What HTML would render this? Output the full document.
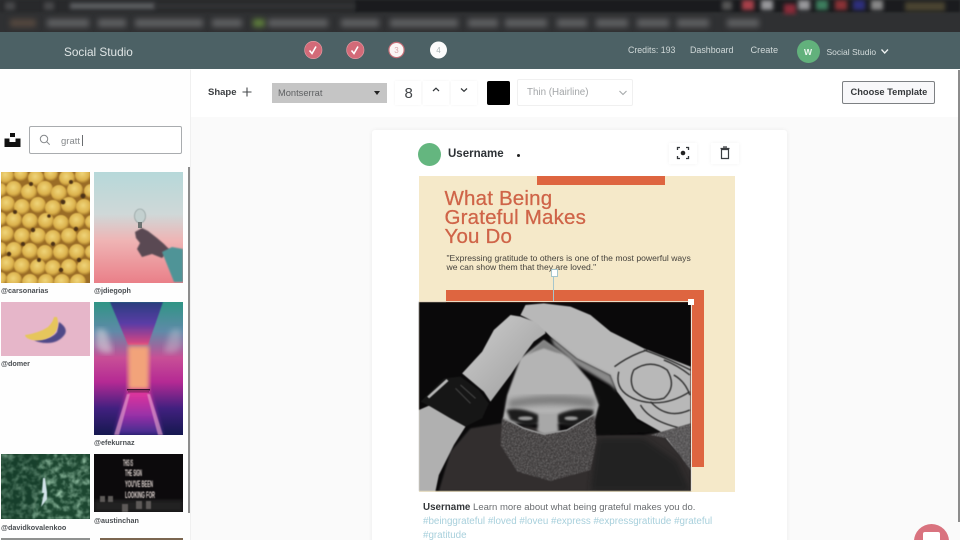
<!DOCTYPE html>
<html><head><meta charset="utf-8">
<style>
html,body{margin:0;padding:0;width:960px;height:540px;overflow:hidden;background:#fafafa;font-family:"Liberation Sans",sans-serif}
#w{position:relative;width:960px;height:540px;overflow:hidden;background:#fafafa}
.a{position:absolute}
.t{position:absolute;white-space:nowrap;filter:blur(.3px)}
.b{background:#5f6062;position:absolute;filter:blur(3px);height:8px;top:19px}
.cap{position:absolute;font-size:7.2px;font-weight:bold;color:#4a4e52;white-space:nowrap;filter:blur(.25px)}
</style></head><body><div id="w">
<!-- browser chrome -->
<div class="a" style="left:0;top:0;width:960px;height:32px;background:#2f3032;overflow:hidden">
<div class="a" style="left:0;top:0;width:355px;height:12px;background:#28292b;filter:blur(1px)"></div>
<div class="a" style="left:355px;top:0;width:605px;height:12px;background:#1a1b1e;filter:blur(1px)"></div>
<div class="a" style="left:70px;top:3px;width:85px;height:6px;background:#5d5f62;filter:blur(2px)"></div>
<div class="a" style="left:155px;top:4px;width:200px;height:4px;background:#343537;filter:blur(2px)"></div>
<div class="a" style="left:5px;top:2px;width:10px;height:8px;background:#47484a;filter:blur(2px)"></div>
<div class="a" style="left:44px;top:2px;width:10px;height:8px;background:#47484a;filter:blur(2px)"></div>
<div class="b" style="left:10px;width:26px;background:#55483f"></div><div class="b" style="left:47px;width:42px"></div>
<div class="b" style="left:98px;width:28px"></div><div class="b" style="left:135px;width:68px"></div>
<div class="b" style="left:212px;width:30px"></div><div class="b" style="left:253px;width:12px;background:#5f7f3c"></div>
<div class="b" style="left:268px;width:60px"></div><div class="b" style="left:341px;width:38px"></div>
<div class="b" style="left:390px;width:68px"></div><div class="b" style="left:468px;width:30px"></div>
<div class="b" style="left:505px;width:42px"></div><div class="b" style="left:557px;width:30px"></div>
<div class="b" style="left:596px;width:32px"></div><div class="b" style="left:637px;width:32px"></div>
<div class="b" style="left:677px;width:32px"></div><div class="b" style="left:727px;width:32px"></div>
<div class="a" style="left:722px;top:1px;width:10px;height:9px;background:#555;filter:blur(2px)"></div>
<div class="a" style="left:742px;top:0;width:12px;height:10px;background:#a8404a;filter:blur(2px)"></div>
<div class="a" style="left:761px;top:0;width:12px;height:10px;background:#98989b;filter:blur(2px)"></div>
<div class="a" style="left:784px;top:4px;width:12px;height:10px;background:#8a2c3a;filter:blur(2px)"></div>
<div class="a" style="left:798px;top:0;width:12px;height:10px;background:#98989b;filter:blur(2px)"></div>
<div class="a" style="left:816px;top:0;width:12px;height:10px;background:#3d7d5e;filter:blur(2px)"></div>
<div class="a" style="left:835px;top:0;width:12px;height:10px;background:#8a3236;filter:blur(2px)"></div>
<div class="a" style="left:853px;top:0;width:12px;height:10px;background:#2e2f7c;filter:blur(2px)"></div>
<div class="a" style="left:871px;top:0;width:12px;height:10px;background:#888;filter:blur(2px)"></div>
<div class="a" style="left:905px;top:2px;width:40px;height:9px;background:#4a4431;filter:blur(2px)"></div>
</div>
<!-- nav -->
<div class="a" style="left:0;top:32px;width:960px;height:37px;background:#4c6165"></div>
<div class="t" style="left:64px;top:44.5px;font-size:11.8px;color:#dfe5e5">Social Studio</div>
<svg class="a" style="left:300px;top:38px;filter:blur(.35px)" width="160" height="24">
<circle cx="13.3" cy="12" r="8.7" fill="#d36a78" stroke="#e9a0a8" stroke-width=".6"/><path d="M9.5 12.5l2.5 3 4-7" fill="none" stroke="#fff" stroke-width="1.6"/>
<circle cx="55.3" cy="12" r="8.7" fill="#d36a78" stroke="#e9a0a8" stroke-width=".6"/><path d="M51.5 12.5l2.5 3 4-7" fill="none" stroke="#fff" stroke-width="1.6"/>
<circle cx="96.5" cy="12" r="7.6" fill="#fbf6f5" stroke="#c66f78" stroke-width="1.2"/><text x="96.5" y="15" font-size="8" text-anchor="middle" fill="#d8a8ac" font-family="Liberation Sans">3</text>
<circle cx="138.5" cy="12" r="8.5" fill="#fbfbfb"/><text x="138.5" y="15" font-size="8" text-anchor="middle" fill="#a9b3b5" font-family="Liberation Sans">4</text>
</svg>
<div class="t" style="left:628px;top:44.5px;font-size:8.8px;color:#d0d8d8">Credits: 193</div>
<div class="t" style="left:690px;top:44.5px;font-size:8.9px;color:#d0d8d8">Dashboard</div>
<div class="t" style="left:750.5px;top:44.5px;font-size:9.2px;color:#d0d8d8">Create</div>
<div class="a" style="left:797px;top:40px;width:23px;height:23px;border-radius:50%;background:#62b17c"></div>
<div class="t" style="left:804px;top:46.5px;font-size:8.5px;font-weight:bold;color:#eef7f1">W</div>
<div class="t" style="left:826.5px;top:46.5px;font-size:8.5px;color:#d4dcdc">Social Studio</div>
<svg class="a" style="left:880px;top:47px" width="10" height="9"><path d="M1.5 2.5L4.7 6 8 2.5" fill="none" stroke="#eef2f2" stroke-width="1.3"/></svg>
<!-- left panel -->
<div class="a" style="left:0;top:69px;width:190px;height:471px;background:#fefefe"></div>
<!-- toolbar -->
<div class="a" style="left:191px;top:69px;width:769px;height:48px;background:#fff"></div>
<div class="a" style="left:190px;top:70px;width:1px;height:470px;background:#f0f0f0"></div>
<div class="t" style="left:208px;top:87px;font-size:9.5px;font-weight:bold;color:#3c3f42">Shape</div>
<svg class="a" style="left:241px;top:86px" width="12" height="12"><path d="M6 1.5v9M1.5 6h9" stroke="#45484b" stroke-width="1.1"/></svg>
<div class="a" style="left:272px;top:83px;width:115px;height:20px;background:#c5c5c5"></div>
<div class="t" style="left:278px;top:87.5px;font-size:9.3px;color:#5f6163">Montserrat</div>
<svg class="a" style="left:373px;top:90px" width="8" height="6"><path d="M1 1h6L4 5z" fill="#222"/></svg>
<div class="a" style="left:423px;top:81px;width:26px;height:24px;box-shadow:0 0 3px #f3f3f3"></div>
<div class="a" style="left:451px;top:81px;width:26px;height:24px;box-shadow:0 0 3px #f3f3f3"></div>
<div class="a" style="left:395px;top:81px;width:26px;height:24px;box-shadow:0 0 3px #f3f3f3"></div>
<div class="t" style="left:404.5px;top:85px;font-size:15px;color:#44474a">8</div>
<svg class="a" style="left:431px;top:86px" width="10" height="8"><path d="M2 5L5 2.2 8 5" fill="none" stroke="#33373a" stroke-width="1.2"/></svg>
<svg class="a" style="left:459px;top:86px" width="10" height="8"><path d="M2 2.5L5 5.3 8 2.5" fill="none" stroke="#33373a" stroke-width="1.2"/></svg>
<div class="a" style="left:487px;top:81px;width:23px;height:23.5px;background:#000;border-radius:2px"></div>
<div class="a" style="left:517px;top:79px;width:116px;height:27px;border:1px solid #f0f0f0;border-radius:2px;box-sizing:border-box;background:#fff"></div>
<div class="t" style="left:527px;top:87px;font-size:9.8px;color:#a3a6a8">Thin (Hairline)</div>
<svg class="a" style="left:618px;top:89px" width="10" height="8"><path d="M1.5 2L5 5.5 8.5 2" fill="none" stroke="#a5a8aa" stroke-width="1.1"/></svg>
<div class="a" style="left:842px;top:81px;width:93px;height:23px;border:1px solid #7d8083;border-radius:2px;box-sizing:border-box;background:#f8f8fa"></div>
<div class="t" style="left:850.5px;top:87px;font-size:9.3px;font-weight:bold;color:#35383b">Choose Template</div>
<!-- page scrollbar -->
<div class="a" style="left:958px;top:70px;width:2px;height:452px;background:#8c8c8c"></div>
<!-- left search -->
<svg class="a" style="left:4px;top:132px" width="17" height="16"><path d="M6 1h5v4H6z M.5 6.5h5V10h6V6.5h5V15H.5z" fill="#111"/></svg>
<div class="a" style="left:28.5px;top:126px;width:153px;height:28px;border:1px solid #a9acaf;border-radius:2px;box-sizing:border-box;background:#fff"></div>
<svg class="a" style="left:39px;top:134px" width="12" height="12"><circle cx="5" cy="5" r="3.7" fill="none" stroke="#85888b" stroke-width="1"/><path d="M7.7 7.7l3 3" stroke="#85888b" stroke-width="1"/></svg>
<div class="t" style="left:61px;top:135.5px;font-size:9.5px;color:#85888b">gratt</div>
<div class="a" style="left:81.5px;top:135px;width:1px;height:11px;background:#6a6d70"></div>
<div class="a" style="left:188px;top:167px;width:2px;height:346px;background:#8d8d8d"></div>
<!-- grid images -->
<svg class="a" style="left:1px;top:172px" width="89" height="111">
<defs>
<radialGradient id="ball" cx=".45" cy=".4" r=".65"><stop offset="0" stop-color="#efd57a"/><stop offset=".65" stop-color="#dcb24c"/><stop offset="1" stop-color="#94661f"/></radialGradient>
<linearGradient id="sky" x1="0" y1="0" x2="0" y2="1"><stop offset="0" stop-color="#b6d8d9"/><stop offset=".38" stop-color="#cfd8d8"/><stop offset=".62" stop-color="#efb4b4"/><stop offset="1" stop-color="#ea7f88"/></linearGradient>
<linearGradient id="neon" x1="0" y1="0" x2="0" y2="1"><stop offset="0" stop-color="#2f9585"/><stop offset=".22" stop-color="#5f8aa8"/><stop offset=".42" stop-color="#c84f96"/><stop offset=".6" stop-color="#b52a94"/><stop offset=".8" stop-color="#41207f"/><stop offset="1" stop-color="#15184f"/></linearGradient>
<linearGradient id="trap" x1="0" y1="0" x2="0" y2="1"><stop offset="0" stop-color="#2a3f7e"/><stop offset=".5" stop-color="#5a3ca6"/><stop offset="1" stop-color="#e0477f"/></linearGradient>
<linearGradient id="floor" x1="0" y1="0" x2="0" y2="1"><stop offset="0" stop-color="#e8359a"/><stop offset=".55" stop-color="#9a30a8"/><stop offset="1" stop-color="#3a2c8c"/></linearGradient>
<linearGradient id="arm" x1="0" y1="0" x2="1" y2="1"><stop offset="0" stop-color="#cfcfcf"/><stop offset="1" stop-color="#9a9a9a"/></linearGradient>
<filter id="b1"><feGaussianBlur stdDeviation=".5"/></filter><filter id="b2"><feGaussianBlur stdDeviation="2"/></filter><filter id="b3"><feGaussianBlur stdDeviation="3"/></filter><filter id="b8"><feGaussianBlur stdDeviation=".8"/></filter>
<filter id="k12"><feGaussianBlur stdDeviation="9"/></filter><filter id="k4"><feGaussianBlur stdDeviation="4"/></filter><filter id="k2"><feGaussianBlur stdDeviation="2"/></filter>
<filter id="noise" x="0" y="0" width="100%" height="100%"><feTurbulence type="fractalNoise" baseFrequency=".3" numOctaves="2" seed="3"/><feColorMatrix values="0 0 0 0 .5  0 0 0 0 .49  0 0 0 0 .49  1.400 0 0 0 -.55"/><feComposite in2="SourceGraphic" operator="in"/></filter>
<filter id="forest" x="0" y="0" width="100%" height="100%"><feTurbulence type="fractalNoise" baseFrequency=".16" numOctaves="3" seed="8"/><feColorMatrix values="0 0 0 0 .32  0 0 0 0 .56  0 0 0 0 .4  2 0 0 0 -.8"/><feGaussianBlur stdDeviation=".5"/><feComposite in2="SourceGraphic" operator="in"/></filter>
</defs>
<rect width="89" height="111" fill="#9a6c26"/>
<g fill="url(#ball)" filter="url(#b1)">
<circle cx="5" cy="4" r="8"/><circle cx="20" cy="2" r="7"/><circle cx="35" cy="6" r="8"/><circle cx="50" cy="2" r="7"/><circle cx="66" cy="6" r="8"/><circle cx="82" cy="3" r="8"/>
<circle cx="-1" cy="18" r="7"/><circle cx="13" cy="17" r="8"/><circle cx="28" cy="20" r="8"/><circle cx="44" cy="17" r="8"/><circle cx="58" cy="21" r="8"/><circle cx="74" cy="18" r="8"/><circle cx="90" cy="19" r="7"/>
<circle cx="6" cy="32" r="8"/><circle cx="21" cy="35" r="8"/><circle cx="37" cy="33" r="8"/><circle cx="52" cy="36" r="8"/><circle cx="68" cy="33" r="8"/><circle cx="83" cy="35" r="8"/>
<circle cx="-1" cy="47" r="7"/><circle cx="13" cy="48" r="8"/><circle cx="29" cy="49" r="8"/><circle cx="45" cy="49" r="8"/><circle cx="60" cy="51" r="8"/><circle cx="76" cy="49" r="8"/><circle cx="91" cy="50" r="7"/>
<circle cx="5" cy="62" r="8"/><circle cx="21" cy="64" r="8"/><circle cx="37" cy="64" r="8"/><circle cx="52" cy="66" r="8"/><circle cx="68" cy="64" r="8"/><circle cx="84" cy="65" r="8"/>
<circle cx="-1" cy="77" r="7"/><circle cx="13" cy="78" r="8"/><circle cx="29" cy="79" r="8"/><circle cx="44" cy="81" r="8"/><circle cx="60" cy="80" r="8"/><circle cx="76" cy="80" r="8"/><circle cx="91" cy="80" r="7"/>
<circle cx="6" cy="92" r="8"/><circle cx="21" cy="94" r="8"/><circle cx="37" cy="95" r="8"/><circle cx="52" cy="96" r="8"/><circle cx="68" cy="95" r="8"/><circle cx="84" cy="95" r="8"/>
<circle cx="13" cy="108" r="8"/><circle cx="29" cy="110" r="8"/><circle cx="45" cy="110" r="8"/><circle cx="61" cy="110" r="8"/><circle cx="77" cy="110" r="8"/><circle cx="-1" cy="107" r="7"/>
</g>
<g fill="#4e3312" filter="url(#b1)"><circle cx="32" cy="58" r="2.200"/><circle cx="62" cy="30" r="2.400"/><circle cx="75" cy="57" r="2.200"/><circle cx="8" cy="82" r="2.200"/><circle cx="60" cy="98" r="2.200"/><circle cx="30" cy="12" r="2"/><circle cx="82" cy="24" r="2.400"/><circle cx="14" cy="40" r="2"/><circle cx="52" cy="72" r="2.200"/><circle cx="70" cy="10" r="2"/><circle cx="38" cy="88" r="2"/><circle cx="78" cy="88" r="2.200"/><circle cx="22" cy="72" r="2"/><circle cx="48" cy="44" r="1.800"/></g>
</svg>
<div class="cap" style="left:1px;top:286px">@carsonarias</div>
<svg class="a" style="left:94px;top:172px" width="89" height="111">
<rect width="89" height="111" fill="url(#sky)"/>
<ellipse cx="46" cy="44" rx="5.5" ry="7" fill="#c3d0cf" stroke="#7e8d8c" stroke-width=".6" filter="url(#b1)"/>
<rect x="44" y="50" width="4" height="6" fill="#6d7372"/>
<path d="M41 60l7-4 6 3 9 7 7 6 6 6-8 8-10-4-10 3-5-8 3-6-4-5z" fill="#5a4a52" filter="url(#b8)"/>
<path d="M68 80l10-5 11 2v33H80z" fill="#4f9497" filter="url(#b8)"/>
</svg>
<div class="cap" style="left:94px;top:286px">@jdiegoph</div>
<svg class="a" style="left:1px;top:302px" width="89" height="54">
<rect width="89" height="54" fill="#e6b6c9"/>
<path d="M58 20Q67 26 64 32 58 41 46 41 38 41 33 38 50 38 56 30z" fill="#4f4a88" filter="url(#b8)"/>
<path d="M24 33Q38 31 47 25 52 20 53 15L56 15Q59 25 53 32 44 40 31 38 24 36 24 33z" fill="#e6c65c" filter="url(#b1)"/>
</svg>
<div class="cap" style="left:1px;top:359px">@domer</div>
<svg class="a" style="left:94px;top:302px" width="89" height="133">
<rect width="89" height="133" fill="url(#neon)"/>
<path d="M2 28q10-4 12 6l5 16q-12 4-17-6z" fill="#e8e6e6" opacity=".5" filter="url(#b3)"/>
<path d="M87 28q-10-4-12 6l-5 16q12 4 17-6z" fill="#e8e6e6" opacity=".3" filter="url(#b3)"/>
<path d="M16 0h53L54 43H34z" fill="url(#trap)" filter="url(#b1)"/>
<rect x="34" y="44" width="21" height="44" fill="#f2a37a" filter="url(#b2)"/>
<path d="M34 88h21l14 45H20z" fill="url(#floor)" filter="url(#b2)"/>
<path d="M33 92l-13 41h5l11-41zM56 92l13 41h-5L53 92z" fill="#f0a8d0" opacity=".6" filter="url(#b1)"/>
<rect x="33" y="87" width="23" height="1.400" fill="#3a1330"/><rect x="34" y="89.5" width="21" height=".8" fill="#5d1c48"/>
</svg>
<div class="cap" style="left:94px;top:438px">@efekurnaz</div>
<svg class="a" style="left:1px;top:454px" width="89" height="65">
<rect width="89" height="65" fill="#1c4630"/>
<rect width="89" height="65" fill="#000" filter="url(#forest)"/>
<path d="M0 0h36L42 30 30 65H0z" fill="#0e3322" opacity=".35" filter="url(#b3)"/>
<path d="M42 24l2 0 2 14 0 7-6 8 3-14-2 0z" fill="#d3e4ea" filter="url(#b1)"/>
</svg>
<div class="cap" style="left:1px;top:523px">@davidkovalenkoo</div>
<svg class="a" style="left:94px;top:454px" width="89" height="58">
<rect width="89" height="58" fill="#0c0a0c"/>
<path d="M0 46h89v12H0z" fill="#232020" filter="url(#b2)"/>
<g font-family="Liberation Sans" font-weight="bold" fill="#e2d8d4" font-size="9" filter="url(#b1)"><text x="29" y="12" textLength="10" lengthAdjust="spacingAndGlyphs">THIS IS</text><text x="31" y="22" textLength="17" lengthAdjust="spacingAndGlyphs">THE SIGN</text><text x="31" y="33" textLength="28" lengthAdjust="spacingAndGlyphs">YOU'VE BEEN</text><text x="31" y="44" textLength="30" lengthAdjust="spacingAndGlyphs">LOOKING FOR</text></g>
<g fill="#5d5a58" filter="url(#b1)"><rect x="6" y="42" width="5" height="6"/><rect x="14" y="42" width="5" height="6"/><rect x="28" y="50" width="6" height="8"/><rect x="42" y="47" width="6" height="8"/><rect x="52" y="47" width="5" height="8"/></g>
</svg>
<div class="cap" style="left:94px;top:516px">@austinchan</div>
<div class="a" style="left:1px;top:538px;width:89px;height:2px;background:#8f9190"></div>
<div class="a" style="left:100px;top:538px;width:83px;height:2px;background:#7b6650"></div>
<!-- card -->
<div class="a" style="left:372px;top:130px;width:415px;height:420px;background:#fff;border-radius:3px;box-shadow:0 0 5px rgba(0,0,0,.06)"></div>
<div class="a" style="left:418px;top:143px;width:23px;height:23px;border-radius:50%;background:#64b67f"></div>
<div class="t" style="left:448px;top:148px;font-size:11.5px;font-weight:bold;color:#2e3236">Username</div>
<div class="a" style="left:517px;top:153.5px;width:3px;height:3px;border-radius:50%;background:#222"></div>
<div class="a" style="left:669px;top:143px;width:28px;height:21px;box-shadow:0 0 4px #f3f3f3"></div>
<div class="a" style="left:711px;top:143px;width:28px;height:21px;box-shadow:0 0 4px #f3f3f3"></div>
<svg class="a" style="left:676px;top:146px" width="14" height="14"><path d="M1.5 4V1.5H4M10 1.5h2.5V4M12.5 10v2.5H10M4 12.5H1.5V10" fill="none" stroke="#33363a" stroke-width="1.3"/><circle cx="7" cy="7" r="2.3" fill="#222"/></svg>
<svg class="a" style="left:719px;top:146px" width="12" height="14"><path d="M2.5 3.5h7v9h-7z" fill="none" stroke="#3a3d40" stroke-width="1.2"/><path d="M1.5 2.5h9M4 1h4" stroke="#3a3d40" stroke-width="1.2"/></svg>
<!-- design -->
<div class="a" style="left:418.5px;top:175.5px;width:316px;height:316.5px;background:#f5e9c9"></div>
<div class="a" style="left:536.5px;top:175.5px;width:128.5px;height:9.5px;background:#de6540"></div>
<div class="t" style="left:444.5px;top:188.5px;font-size:20.5px;line-height:19px;color:#cf6448;-webkit-text-stroke:.25px #cf6448;letter-spacing:.18px">What Being<br>Grateful Makes<br>You Do</div>
<div class="t" style="left:446.5px;top:253.5px;font-size:8.6px;line-height:9.3px;color:#45423c">"Expressing gratitude to others is one of the most powerful ways<br>we can show them that they are loved."</div>
<div class="a" style="left:445.5px;top:289.5px;width:258.5px;height:177.5px;background:#de6540"></div>
<!-- photo -->
<svg class="a" style="left:418.5px;top:302px;filter:blur(.4px)" width="272" height="189" viewBox="0 0 272 189">
<rect width="272" height="189" fill="#0a090a"/>
<g transform="translate(-8.5 -7) scale(.3333)">
<!-- torso -->
<path d="M85 588L120 470 180 400 270 385 550 420 700 420 750 410 840 520V588z" fill="#302e2f" filter="url(#k2)"/>
<path d="M560 430L700 430 800 500 840 588H540z" fill="#242223" filter="url(#k12)"/>
<!-- neck/back shadow right of head -->
<path d="M545 250L620 290 680 380 750 410 560 420z" fill="#0c0b0c" filter="url(#k2)"/>
<!-- head -->
<path d="M330 190L400 135 480 190 540 260 565 330 550 385 275 385 290 300z" fill="#b4b4b4" filter="url(#k2)"/>
<path d="M350 180L400 135 460 178 435 172 400 160 372 170z" fill="#828282" filter="url(#k2)"/>
<path d="M295 315Q420 290 555 310L550 340Q420 318 295 340z" fill="#7d7d7d" filter="url(#k12)"/>
<path d="M288 345Q330 335 385 360L390 385 350 395 300 375zM440 360Q490 335 550 345L545 375 480 395 438 385z" fill="#1c1b1b" filter="url(#k4)"/>
<ellipse cx="345" cy="370" rx="22" ry="6" fill="#9b9b9b" filter="url(#k2)"/><ellipse cx="482" cy="370" rx="20" ry="6" fill="#9b9b9b" filter="url(#k2)"/>
<path d="M385 355L440 355 445 415 400 420 380 410z" fill="#a8a8a8" filter="url(#k4)"/>
<!-- mask -->
<path d="M275 370L340 400 400 418 470 405 552 360 558 440 540 525 420 558 320 530 270 450z" fill="#383536" filter="url(#k2)"/>
<path d="M275 370L340 400 400 418 470 405 552 360 558 440 540 525 420 558 320 530 270 450z" fill="#000" filter="url(#noise)"/>
<path d="M278 368L340 400 400 418 470 405 552 358" fill="none" stroke="#9a9a9a" stroke-width="4" filter="url(#b1)"/>
<!-- left hand -->
<path d="M155 235L215 170 250 105 300 60 330 65 400 90 405 115 370 140 340 180 300 240 240 320 220 290z" fill="url(#arm)" filter="url(#b8)"/>
<!-- lower forearm -->
<path d="M25 345L60 330 120 365 165 395 130 450 85 540 75 588H25z" fill="#b0b0b0" filter="url(#b8)"/>
<!-- wristband -->
<path d="M30 320L100 250 150 245 205 285 235 325 215 370 165 395 120 370 60 335z" fill="#171617" filter="url(#b8)"/>
<path d="M50 305L108 252 114 258 56 310z" fill="#b8b8b8" filter="url(#b1)"/>
<path d="M150 270L195 310M135 280L180 325" stroke="#4a4a4a" stroke-width="3" filter="url(#b1)"/>
<!-- right hand + arm -->
<path d="M330 60L345 30 400 25 480 35 540 60 600 110 700 160 840 215V520L750 410 680 370 620 290 600 240 500 190 420 125 380 85z" fill="#b8b8b8" filter="url(#b8)"/>
<path d="M420 125L500 190 600 240 620 290 600 270 500 210 430 150z" fill="#8a8a8a" filter="url(#k4)"/>
<!-- tattoo -->
<g fill="none" stroke="#2a2a2a" stroke-width="4" filter="url(#b1)">
<path d="M612 215Q660 180 710 165M700 165Q760 185 840 225"/>
<path d="M625 230Q610 290 680 315 760 340 838 290"/>
<path d="M670 225Q720 190 770 225 800 275 760 310 710 325 670 285 655 255 670 225z"/>
<path d="M720 320Q770 375 838 345M690 330Q720 385 838 405"/>
<path d="M760 195Q800 210 838 240M790 240Q825 260 838 300"/>
</g>
<!-- sleeve -->
<path d="M720 420L840 385V525L770 430z" fill="#4a4849"/>
<path d="M720 420L840 385V525L770 430z" fill="#000" filter="url(#noise)"/>
</g>
</svg>
<!-- selection -->
<div class="a" style="left:553px;top:273px;width:1px;height:29px;background:#a6c6cc"></div>
<div class="a" style="left:551px;top:269px;width:5px;height:6px;background:#fff;border:1px solid #a6c6cc"></div>
<div class="a" style="left:690.5px;top:302px;width:1px;height:189px;background:#e8e4da"></div>
<div class="a" style="left:418.5px;top:301px;width:272px;height:1px;background:#e8d9c2"></div>
<div class="a" style="left:688px;top:299px;width:6px;height:6px;background:#fff"></div>
<!-- caption -->
<div class="t" style="left:423px;top:501px;font-size:9.5px;line-height:14px;color:#6a6d70"><b style="color:#34373a;font-size:9.8px">Username</b> Learn more about what being grateful makes you do.</div>
<div class="t" style="left:423px;top:515px;font-size:9.8px;line-height:14px;color:#a8d0dc">#beinggrateful #loved #loveu #express #expressgratitude #grateful<br>#gratitude</div>
<!-- chat -->
<div class="a" style="left:914px;top:524px;width:35px;height:35px;border-radius:50%;background:#d9737f"></div>
<div class="a" style="left:923px;top:532px;width:17px;height:10px;background:#fff;border-radius:2px"></div>
</div></body></html>
